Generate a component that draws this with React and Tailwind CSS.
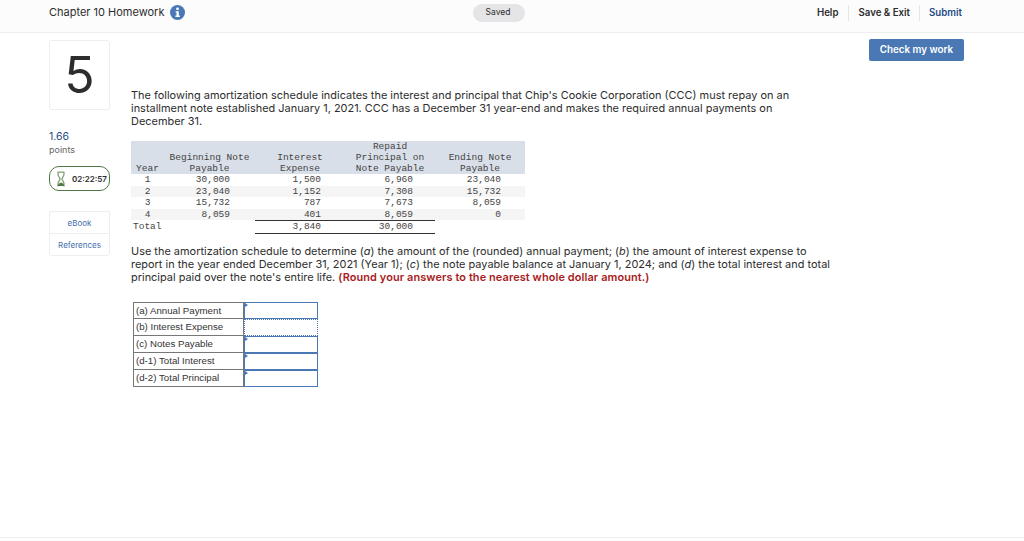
const rows = [
  ["1", "30,000", "1,500", "6,960", "23,040"],
  ["2", "23,040", "1,152", "7,308", "15,732"],
  ["3", "15,732", "787", "7,673", "8,059"],
  ["4", "8,059", "401", "8,059", "0"],
];

const answers = [
  "(a) Annual Payment",
  "(b) Interest Expense",
  "(c) Notes Payable",
  "(d-1) Total Interest",
  "(d-2) Total Principal",
];

function InfoBadge() {
  return (
    <svg width="15" height="15" viewBox="0 0 15 15">
      <circle cx="7.5" cy="7.5" r="7.5" fill="#4a78b5" />
      <circle cx="7.5" cy="3.8" r="1.4" fill="#fff" />
      <path d="M5.6 6.2h3.2v4.4h1v1.3H5.4v-1.3h1.1V7.5h-.9z" fill="#fff" />
    </svg>
  );
}

function Hourglass() {
  return (
    <svg width="10" height="16" viewBox="0 0 10 16" fill="none">
      <path d="M2 1.2c-.6 3.6 1.2 5 2.2 6.8-1 1.8-2.8 3.2-2.2 6.8M8 1.2c.6 3.6-1.2 5-2.2 6.8 1 1.8 2.8 3.2 2.2 6.8M2 1.2h6" stroke="#7fa076" strokeWidth="1.3" strokeLinecap="round" />
      <path d="M1.6 15c.3-2.2 2-3 3.4-3.6 1.4.6 3.1 1.4 3.4 3.6z" fill="#4f7a45" />
    </svg>
  );
}

export default function App() {
  return (
    <div className="h-[538px] w-[1024px] overflow-hidden border-b border-[#eeeeee] bg-white font-['Inter',sans-serif] text-[#2d2d2d]">
      {/* HEADER */}
      <header className="flex h-[33px] items-center border-b border-[#eeeeee] bg-[#fcfcfc] pb-[7px] pl-[49px] pr-[62px]">
        <div className="flex w-[424px] items-center gap-[6px] text-[11px]">
          <span>Chapter 10 Homework</span>
          <InfoBadge />
        </div>
        <div className="flex h-[18px] w-[52px] items-center justify-center rounded-full bg-[#e5e4e6] pr-[2px] text-[8.5px]">
          Saved
        </div>
        <div className="ml-auto flex items-center text-[9.7px] font-semibold">
          <span className="pr-[10px] leading-[16px]">Help</span>
          <span className="border-l border-[#e6e6e6] px-[9px] leading-[16px]">Save &amp; Exit</span>
          <span className="border-l border-[#e6e6e6] pl-[9px] leading-[16px] text-[#1f4a84]">Submit</span>
        </div>
      </header>

      <div className="flex pl-[49px] pr-[60px]">
        {/* LEFT COLUMN */}
        <aside className="w-[61px] shrink-0 pt-[7px]">
          <div className="flex h-[70px] w-[61px] items-center justify-center rounded-[3px] border border-[#eeeeee] text-[50px] leading-none">
            5
          </div>
          <div className="mt-[20px] text-[10.5px] leading-[14px] text-[#1f4a84]">1.66</div>
          <div className="-mt-[1px] text-[9px] leading-[13px] text-[#666666]">points</div>
          <div className="mt-[10px] flex h-[25px] w-[61px] items-center gap-[6px] rounded-[10px] border border-[#4f7a45] pl-[6px] text-[8px] font-semibold">
            <Hourglass />
            <span>02:22:57</span>
          </div>
          <div className="mt-[20px] rounded-b-[3px] border border-[#eeeeee] text-center text-[8px] text-[#3f6fae]">
            <div className="flex h-[22px] items-center justify-center border-b border-[#eeeeee]">eBook</div>
            <div className="flex h-[21px] items-center justify-center">References</div>
          </div>
        </aside>

        {/* QUESTION */}
        <main className="ml-[21px] w-[700px] pt-[56px] text-[10.95px] leading-[13px]">
          <p className="w-[670px]">
            The following amortization schedule indicates the interest and principal that Chip's Cookie Corporation (CCC) must repay on an installment note established January 1, 2021. CCC has a December 31 year-end and makes the required annual payments on December 31.
          </p>

          <table className="mt-[13px] w-[394px] table-fixed border-collapse font-['Liberation_Mono',monospace] text-[9.5px] leading-[11px] text-[#444444]">
            <colgroup>
              <col className="w-[33px]" />
              <col className="w-[91px]" />
              <col className="w-[90px]" />
              <col className="w-[90px]" />
              <col className="w-[90px]" />
            </colgroup>
            <thead className="bg-[#d9dfe8] text-center">
              <tr>
                <th className="h-[33px] align-bottom font-normal">Year</th>
                <th className="align-bottom font-normal">Beginning Note<br />Payable</th>
                <th className="align-bottom font-normal">Interest<br />Expense</th>
                <th className="align-bottom font-normal">Repaid<br />Principal on<br />Note Payable</th>
                <th className="align-bottom font-normal">Ending Note<br />Payable</th>
              </tr>
            </thead>
            <tbody>
              {rows.map((row, i) => (
                <tr key={row[0]} className={`h-[11.5px] ${i % 2 === 1 ? "bg-[#f5f5f5]" : "bg-white"}`}>
                  <td className="text-center">{row[0]}</td>
                  <td className="pr-[25px] text-right">{row[1]}</td>
                  <td className="pr-[24px] text-right">{row[2]}</td>
                  <td className="pr-[22px] text-right">{row[3]}</td>
                  <td className="pr-[24px] text-right">{row[4]}</td>
                </tr>
              ))}
              <tr className="h-[13px]">
                <td className="pl-[2px] text-left">Total</td>
                <td></td>
                <td className="border-y border-[#333333] pr-[24px] text-right">3,840</td>
                <td className="border-y border-[#333333] pr-[22px] text-right">30,000</td>
                <td></td>
              </tr>
            </tbody>
          </table>

          <p className="mt-[11px] w-[700px]">
            Use the amortization schedule to determine (<em>a</em>) the amount of the (rounded) annual payment; (<em>b</em>) the amount of interest expense to report in the year ended December 31, 2021 (Year 1); (<em>c</em>) the note payable balance at January 1, 2024; and (<em>d</em>) the total interest and total principal paid over the note's entire life. <strong className="font-semibold tracking-[0.1px] text-[#a81c1c]">(Round your answers to the nearest whole dollar amount.)</strong>
          </p>

          {/* ANSWERS */}
          <div className="ml-[2px] mt-[18px] w-[185px] font-['Liberation_Sans',sans-serif] text-[9.7px] text-[#333333]">
            {answers.map((label, i) => (
              <div key={label} className="flex h-[17px]">
                <div className={`flex w-[111px] items-center border-x border-b border-[#777777] pl-[2px] ${i === 0 ? "border-t" : ""}`}>{label}</div>
                <div className={`relative flex-1 border border-[#4a78b5] ${i === 1 ? "border-dotted" : ""}`}>
                  {i !== 1 && (
                    <span className="absolute left-0 top-0 h-0 w-0 border-y-[2.5px] border-l-[3px] border-y-transparent border-l-[#4a78b5]" />
                  )}
                </div>
              </div>
            ))}
          </div>
        </main>

        <div className="ml-auto pt-[6px]">
          <button className="block h-[22px] w-[95px] rounded-[2px] bg-[#4a78b5] text-[9.8px] font-semibold text-white">
            Check my work
          </button>
        </div>
      </div>
    </div>
  );
}
